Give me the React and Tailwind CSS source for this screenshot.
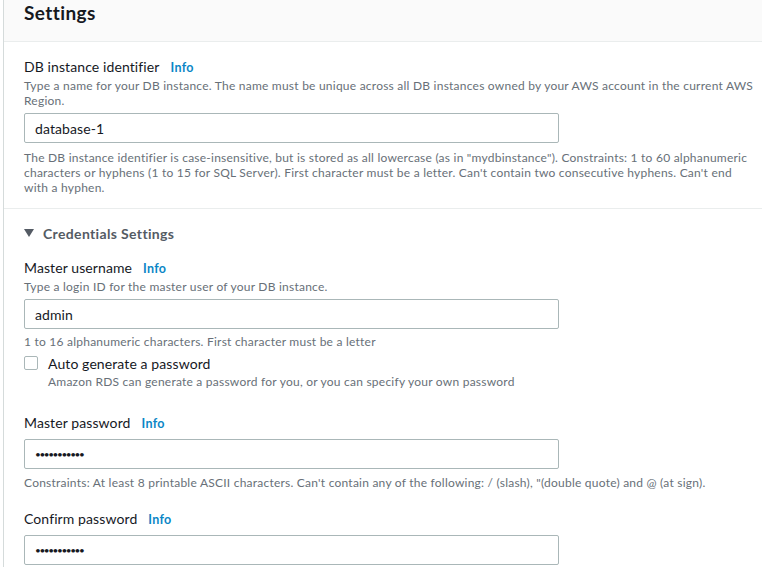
import React from 'react';

const font = { fontFamily: 'Lato, "Liberation Sans", sans-serif' };

const Info = () => (
    <span className="ml-[11px] text-[12.5px] tracking-[0.3px] font-bold text-[#0a86c6]">Info</span>
);

const Label = ({ children, className = '' }) => (
    <div className={`flex items-baseline h-[20px] leading-[20px] text-[14px] tracking-[0.1px] text-[#16191f] ${className}`}>
        <span>{children}</span>
        <Info />
    </div>
);

const Hint = ({ children, className = '' }) => (
    <p className={`text-[12px] leading-[15px] tracking-[0.23px] text-[#687078] ${className}`}>{children}</p>
);

const TextBox = ({ value, secret, className = '' }) => (
    <div className={`w-[535px] h-[30px] border border-[#aab7b8] rounded-[2px] bg-white flex items-center px-[10px] ${className}`}>
        {secret ? (
            <span className="text-[10px] tracking-[-1.4px] text-[#16191f]">•••••••••••</span>
        ) : (
            <span className="text-[14px] tracking-[0.1px] text-[#16191f]">{value}</span>
        )}
    </div>
);

export default function App() {
    return (
        <div className="min-h-screen bg-white pl-[3px]" style={font}>
            <div className="border-l border-[#d5dbdb] min-h-[567px]">
                {/* Header */}
                <div className="h-[42px] bg-[#fafafa] border-b border-[#eaeded] px-5 pt-[1px]">
                    <h2 className="text-[19px] leading-[24px] tracking-[0.4px] font-bold text-[#16191f]">Settings</h2>
                </div>

                {/* Instance identifier */}
                <div className="pl-5 pr-[4px] pt-[15px] pb-[13px] border-b border-[#eaeded]">
                    <Label>DB instance identifier</Label>
                    <Hint className="mt-[1px]">
                        Type a name for your DB instance. The name must be unique across all DB instances owned by your AWS account in the current AWS Region.
                    </Hint>
                    <TextBox value="database-1" className="mt-[5px]" />
                    <Hint className="mt-[7px]">
                        The DB instance identifier is case-insensitive, but is stored as all lowercase (as in "mydbinstance"). Constraints: 1 to 60 alphanumeric characters or hyphens (1 to 15 for SQL Server). First character must be a letter. Can't contain two consecutive hyphens. Can't end with a hyphen.
                    </Hint>
                </div>

                {/* Credentials */}
                <div className="pl-5 pr-[4px] pt-[14px]">
                    <div className="flex items-center h-[20px] gap-[9px]">
                        <svg width="10" height="8" viewBox="0 0 10 8">
                            <path d="M0 0 H10 L5 8 Z" fill="#545b64" />
                        </svg>
                        <span className="text-[14px] tracking-[0.35px] font-bold text-[#545b64]">Credentials Settings</span>
                    </div>

                    <Label className="mt-[15px]">Master username</Label>
                    <Hint className="mt-[1px]">Type a login ID for the master user of your DB instance.</Hint>
                    <TextBox value="admin" className="mt-[5px]" />
                    <Hint className="mt-[5px]">1 to 16 alphanumeric characters. First character must be a letter</Hint>

                    <div className="mt-[4px] flex items-center h-[20px]">
                        <div className="w-[14px] h-[14px] border border-[#aab7b8] rounded-[2px] bg-white" />
                        <span className="ml-[10px] text-[14px] tracking-[0.1px] text-[#16191f]">Auto generate a password</span>
                    </div>
                    <Hint className="mt-[1px] pl-[24px]">
                        Amazon RDS can generate a password for you, or you can specify your own password
                    </Hint>

                    <Label className="mt-[24px]">Master password</Label>
                    <TextBox secret className="mt-[6px]" />
                    <Hint className="mt-[6px]">
                        Constraints: At least 8 printable ASCII characters. Can't contain any of the following: / (slash), "(double quote) and @ (at sign).
                    </Hint>

                    <Label className="mt-[19px]">Confirm password</Label>
                    <TextBox secret className="mt-[6px]" />
                </div>
            </div>
        </div>
    );
}
